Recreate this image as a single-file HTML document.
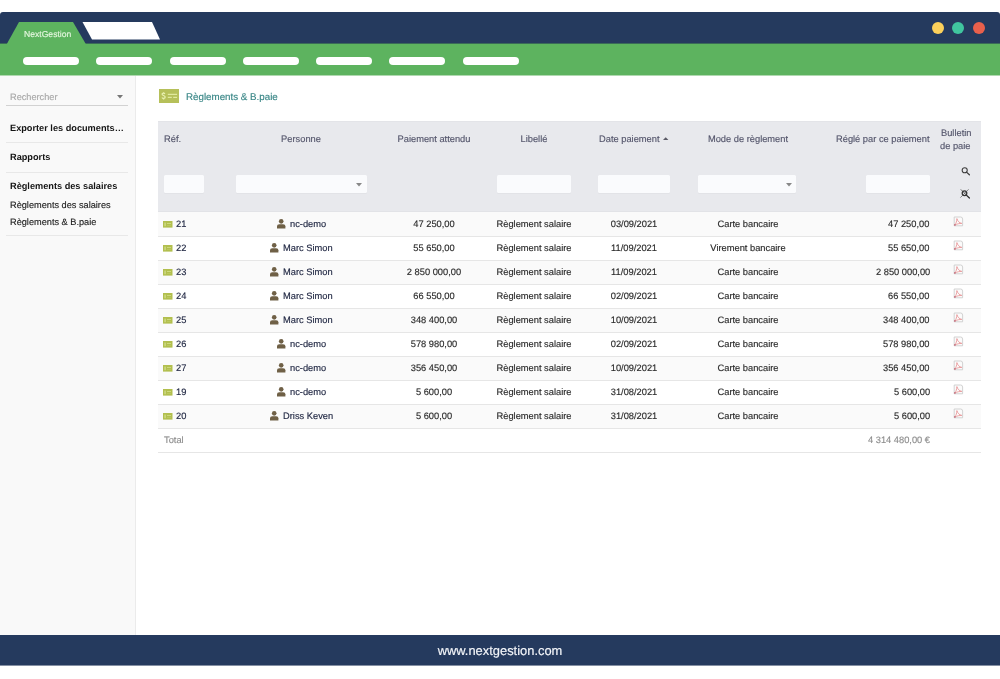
<!DOCTYPE html>
<html><head><meta charset="utf-8"><title>NextGestion</title>
<style>
html,body{margin:0;padding:0;background:#fff;width:1000px;height:679px;overflow:hidden;position:relative;font-family:"Liberation Sans",sans-serif;}
.t{position:absolute;white-space:nowrap;line-height:1;will-change:transform;text-rendering:geometricPrecision;-webkit-text-stroke-width:0.15px;}
.r{position:absolute;}
</style></head><body>
<div class="r" style="left:0px;top:12px;width:1000px;height:31px;background:#253a5e;border-radius:3px 3px 0 0;"></div>
<div class="r" style="left:0px;top:43px;width:1000px;height:1px;background:#3a6b58;"></div>
<div class="r" style="left:0px;top:44px;width:1000px;height:31px;background:#5db35f;"></div>
<div class="r" style="left:0px;top:75px;width:1000px;height:1px;background:#b0d9b0;"></div>
<svg class="r" style="left:0;top:0" width="200" height="45" viewBox="0 0 200 45"><polygon points="19,22 73,22 85.8,44 6.8,44" fill="#5db35f"/><polygon points="82.5,22 152,22 160,39.5 92,39.5" fill="#fff"/></svg>
<div class="t" style="left:23.50px;top:30.02px;font-size:8.6px;color:#e4f6de;">NextGestion</div>
<div class="r" style="left:932px;top:21.8px;width:12px;height:12px;background:#fcd05b;border-radius:50%;"></div>
<div class="r" style="left:952.2px;top:21.8px;width:12px;height:12px;background:#40c59f;border-radius:50%;"></div>
<div class="r" style="left:973px;top:21.8px;width:12px;height:12px;background:#e9604c;border-radius:50%;"></div>
<div class="r" style="left:23.0px;top:56.8px;width:56px;height:8px;background:#fff;border-radius:4px;"></div>
<div class="r" style="left:96.25px;top:56.8px;width:56px;height:8px;background:#fff;border-radius:4px;"></div>
<div class="r" style="left:169.5px;top:56.8px;width:56px;height:8px;background:#fff;border-radius:4px;"></div>
<div class="r" style="left:242.75px;top:56.8px;width:56px;height:8px;background:#fff;border-radius:4px;"></div>
<div class="r" style="left:316.0px;top:56.8px;width:56px;height:8px;background:#fff;border-radius:4px;"></div>
<div class="r" style="left:389.25px;top:56.8px;width:56px;height:8px;background:#fff;border-radius:4px;"></div>
<div class="r" style="left:462.5px;top:56.8px;width:56px;height:8px;background:#fff;border-radius:4px;"></div>
<div class="r" style="left:0px;top:76px;width:135px;height:559px;background:#f9f9f9;"></div>
<div class="r" style="left:135px;top:76px;width:1px;height:559px;background:#ebebeb;"></div>
<div class="t" style="left:10.00px;top:92.51px;font-size:9.2px;color:#a8a8a8;">Rechercher</div>
<div class="r" style="left:6px;top:105px;width:122px;height:1px;background:#d2d2d2;"></div>
<svg class="r" style="left:117px;top:94.5px" width="6" height="4"><polygon points="0,0 6,0 3,3.5" fill="#777"/></svg>
<div class="t" style="left:10.00px;top:123.51px;font-size:9.2px;color:#141414;font-weight:bold;-webkit-text-stroke-width:0;">Exporter les documents…</div>
<div class="r" style="left:6px;top:142px;width:122px;height:1px;background:#e8e8e8;"></div>
<div class="t" style="left:10.00px;top:153.01px;font-size:9.2px;color:#141414;font-weight:bold;-webkit-text-stroke-width:0;">Rapports</div>
<div class="r" style="left:6px;top:172px;width:122px;height:1px;background:#e8e8e8;"></div>
<div class="t" style="left:10.00px;top:182.11px;font-size:9.2px;color:#141414;font-weight:bold;-webkit-text-stroke-width:0;">Règlements des salaires</div>
<div class="t" style="left:10.00px;top:200.81px;font-size:9.2px;color:#1e1e1e;">Règlements des salaires</div>
<div class="t" style="left:10.00px;top:217.81px;font-size:9.2px;color:#1e1e1e;">Règlements &amp; B.paie</div>
<div class="r" style="left:6px;top:235px;width:122px;height:1px;background:#e8e8e8;"></div>
<div class="r" style="left:159px;top:89.2px;width:20px;height:13.6px;background:#b6c05a;"></div>
<svg class="r" style="left:159px;top:89.2px" width="20" height="14" viewBox="0 0 20 14"><path d="M5.6 4.6 C5.2 3.9 4.6 3.7 4.1 3.7 C3.3 3.7 2.8 4.2 2.8 4.8 C2.8 6.3 5.9 5.8 5.9 7.6 C5.9 8.5 5.2 9 4.3 9 C3.6 9 3 8.7 2.7 8.1 M4.3 2.8 V3.7 M4.3 9 V10" fill="none" stroke="#eaf1b4" stroke-width="1.2" transform="translate(0.3,0.4)"/><rect x="8.8" y="4.8" width="9.3" height="1.1" fill="#e6eea6"/><rect x="8.8" y="7.8" width="4" height="1.1" fill="#e6eea6"/><rect x="14.2" y="7.8" width="3.9" height="1.1" fill="#e6eea6"/></svg>
<div class="t" style="left:185.70px;top:92.53px;font-size:9.77px;color:#378585;">Règlements &amp; B.paie</div>
<div class="r" style="left:158px;top:121px;width:823px;height:91px;background:#e8e9ed;border-top:1px solid #e3e4e8;border-bottom:1px solid #e2e3e7;box-sizing:border-box;"></div>
<div class="t" style="left:163.70px;top:135.13px;font-size:9.3px;color:#55566c;">Réf.</div>
<div class="t" style="left:151.20px;width:300px;text-align:center;top:135.13px;font-size:9.3px;color:#55566c;">Personne</div>
<div class="t" style="left:284.00px;width:300px;text-align:center;top:135.13px;font-size:9.3px;color:#55566c;">Paiement attendu</div>
<div class="t" style="left:384.00px;width:300px;text-align:center;top:135.13px;font-size:9.3px;color:#55566c;">Libellé</div>
<div class="t" style="left:599.40px;top:135.13px;font-size:9.3px;color:#55566c;">Date paiement</div>
<svg class="r" style="left:662.8px;top:137.4px" width="6" height="4"><polygon points="0,3 5.4,3 2.7,0.2" fill="#5a5a66"/></svg>
<div class="t" style="left:597.70px;width:300px;text-align:center;top:135.13px;font-size:9.3px;color:#55566c;">Mode de règlement</div>
<div class="t" style="right:70.30px;text-align:right;top:135.13px;font-size:9.3px;color:#55566c;">Réglé par ce paiement</div>
<div class="t" style="left:940.70px;top:129.13px;font-size:9.3px;color:#55566c;">Bulletin</div>
<div class="t" style="left:940.30px;top:141.53px;font-size:9.3px;color:#55566c;">de paie</div>
<div class="r" style="left:163.7px;top:175px;width:40.3px;height:18px;background:#fafbfd;box-shadow:0 1px 0 #e2e3e7;border-radius:1.5px;"></div>
<div class="r" style="left:236px;top:175px;width:130.6px;height:18px;background:#fafbfd;box-shadow:0 1px 0 #e2e3e7;border-radius:1.5px;"></div>
<svg class="r" style="left:356.1px;top:182.5px" width="6" height="4"><polygon points="0,0 6,0 3,3.5" fill="#888"/></svg>
<div class="r" style="left:497px;top:175px;width:74px;height:18px;background:#fafbfd;box-shadow:0 1px 0 #e2e3e7;border-radius:1.5px;"></div>
<div class="r" style="left:597.7px;top:175px;width:72.8px;height:18px;background:#fafbfd;box-shadow:0 1px 0 #e2e3e7;border-radius:1.5px;"></div>
<div class="r" style="left:698.2px;top:175px;width:98.0px;height:18px;background:#fafbfd;box-shadow:0 1px 0 #e2e3e7;border-radius:1.5px;"></div>
<svg class="r" style="left:785.7px;top:182.5px" width="6" height="4"><polygon points="0,0 6,0 3,3.5" fill="#888"/></svg>
<div class="r" style="left:865.5px;top:175px;width:64.5px;height:18px;background:#fafbfd;box-shadow:0 1px 0 #e2e3e7;border-radius:1.5px;"></div>
<svg class="r" style="left:958px;top:164px" width="14" height="14" viewBox="0 0 14 14"><circle cx="6.7" cy="6.2" r="2.55" fill="none" stroke="#3c3c3c" stroke-width="1.05"/><line x1="8.5" y1="8.1" x2="11.4" y2="10.8" stroke="#3c3c3c" stroke-width="1.25" stroke-linecap="round"/></svg>
<svg class="r" style="left:958px;top:187px" width="14" height="14" viewBox="0 0 14 14"><circle cx="6.5" cy="6.2" r="2.3" fill="none" stroke="#333" stroke-width="1.25"/><line x1="2.8" y1="2.4" x2="11.4" y2="11" stroke="#444" stroke-width="0.8"/><line x1="10.6" y1="2.3" x2="2.4" y2="10.6" stroke="#555" stroke-width="0.7"/><line x1="8.3" y1="8.1" x2="11.4" y2="11" stroke="#333" stroke-width="1.2" stroke-linecap="round"/></svg>
<div class="r" style="left:158px;top:404px;width:823px;height:24px;background:#fafafa;"></div>
<div class="r" style="left:158px;top:380px;width:823px;height:24px;background:#ffffff;"></div>
<div class="r" style="left:158px;top:356px;width:823px;height:24px;background:#fafafa;"></div>
<div class="r" style="left:158px;top:332px;width:823px;height:24px;background:#ffffff;"></div>
<div class="r" style="left:158px;top:308px;width:823px;height:24px;background:#fafafa;"></div>
<div class="r" style="left:158px;top:284px;width:823px;height:24px;background:#ffffff;"></div>
<div class="r" style="left:158px;top:260px;width:823px;height:24px;background:#fafafa;"></div>
<div class="r" style="left:158px;top:236px;width:823px;height:24px;background:#ffffff;"></div>
<div class="r" style="left:158px;top:212px;width:823px;height:24px;background:#fafafa;"></div>
<svg class="r" style="left:163.3px;top:220.90px" width="10" height="7" viewBox="0 0 10 7"><rect x="0" y="0" width="9.5" height="6.6" fill="#b2bf4e"/><rect x="1.3" y="1.6" width="1.6" height="3.6" fill="#cbd880"/><rect x="4" y="2.2" width="4" height="0.8" fill="#d4e08a"/><rect x="4" y="4" width="4" height="0.6" fill="#c2cf6a"/></svg>
<div class="t" style="left:175.70px;top:219.73px;font-size:9.3px;color:#232a45;">21</div>
<svg class="r" style="left:276.71px;top:218.60px" width="10" height="11" viewBox="0 0 10 11"><circle cx="4.2" cy="2.35" r="2.3" fill="#6f6046"/><path d="M0 9.4 V7.3 Q0 5.3 2.3 5.3 H6.1 Q8.4 5.3 8.4 7.3 V9.4 Z" fill="#6f6046"/></svg>
<div class="t" style="left:289.51px;top:219.73px;font-size:9.3px;color:#232a45;">nc-demo</div>
<div class="t" style="left:284.00px;width:300px;text-align:center;top:219.73px;font-size:9.3px;color:#2b2b2b;">47 250,00</div>
<div class="t" style="left:384.30px;width:300px;text-align:center;top:219.73px;font-size:9.3px;color:#2b2b2b;">Règlement salaire</div>
<div class="t" style="left:484.20px;width:300px;text-align:center;top:219.73px;font-size:9.3px;color:#2b2b2b;">03/09/2021</div>
<div class="t" style="left:597.80px;width:300px;text-align:center;top:219.73px;font-size:9.3px;color:#2b2b2b;">Carte bancaire</div>
<div class="t" style="right:70.20px;text-align:right;top:219.73px;font-size:9.3px;color:#2b2b2b;">47 250,00</div>
<svg class="r" style="left:953px;top:216.30px" width="11" height="11" viewBox="0 0 11 11"><path d="M1.2 1 H7.6 Q9.6 1 9.6 3 V9.8 H1.2 Z" fill="#fbfbfb" stroke="#cdcdcd" stroke-width="0.9"/><path d="M1.6 9.1 C3.2 7.4 3.8 5 3.9 2.6 C4.6 5 6.2 7 8.8 7.4 C6.6 7.4 4.2 7.8 1.6 9.1 Z" fill="none" stroke="#e79294" stroke-width="0.85"/><circle cx="1.9" cy="8.9" r="0.85" fill="#c07080"/></svg>
<svg class="r" style="left:163.3px;top:244.90px" width="10" height="7" viewBox="0 0 10 7"><rect x="0" y="0" width="9.5" height="6.6" fill="#b2bf4e"/><rect x="1.3" y="1.6" width="1.6" height="3.6" fill="#cbd880"/><rect x="4" y="2.2" width="4" height="0.8" fill="#d4e08a"/><rect x="4" y="4" width="4" height="0.6" fill="#c2cf6a"/></svg>
<div class="t" style="left:175.70px;top:243.73px;font-size:9.3px;color:#232a45;">22</div>
<svg class="r" style="left:270.00px;top:242.60px" width="10" height="11" viewBox="0 0 10 11"><circle cx="4.2" cy="2.35" r="2.3" fill="#6f6046"/><path d="M0 9.4 V7.3 Q0 5.3 2.3 5.3 H6.1 Q8.4 5.3 8.4 7.3 V9.4 Z" fill="#6f6046"/></svg>
<div class="t" style="left:282.80px;top:243.73px;font-size:9.3px;color:#232a45;">Marc Simon</div>
<div class="t" style="left:284.00px;width:300px;text-align:center;top:243.73px;font-size:9.3px;color:#2b2b2b;">55 650,00</div>
<div class="t" style="left:384.30px;width:300px;text-align:center;top:243.73px;font-size:9.3px;color:#2b2b2b;">Règlement salaire</div>
<div class="t" style="left:484.20px;width:300px;text-align:center;top:243.73px;font-size:9.3px;color:#2b2b2b;">11/09/2021</div>
<div class="t" style="left:597.80px;width:300px;text-align:center;top:243.73px;font-size:9.3px;color:#2b2b2b;">Virement bancaire</div>
<div class="t" style="right:70.20px;text-align:right;top:243.73px;font-size:9.3px;color:#2b2b2b;">55 650,00</div>
<svg class="r" style="left:953px;top:240.30px" width="11" height="11" viewBox="0 0 11 11"><path d="M1.2 1 H7.6 Q9.6 1 9.6 3 V9.8 H1.2 Z" fill="#fbfbfb" stroke="#cdcdcd" stroke-width="0.9"/><path d="M1.6 9.1 C3.2 7.4 3.8 5 3.9 2.6 C4.6 5 6.2 7 8.8 7.4 C6.6 7.4 4.2 7.8 1.6 9.1 Z" fill="none" stroke="#e79294" stroke-width="0.85"/><circle cx="1.9" cy="8.9" r="0.85" fill="#c07080"/></svg>
<svg class="r" style="left:163.3px;top:268.90px" width="10" height="7" viewBox="0 0 10 7"><rect x="0" y="0" width="9.5" height="6.6" fill="#b2bf4e"/><rect x="1.3" y="1.6" width="1.6" height="3.6" fill="#cbd880"/><rect x="4" y="2.2" width="4" height="0.8" fill="#d4e08a"/><rect x="4" y="4" width="4" height="0.6" fill="#c2cf6a"/></svg>
<div class="t" style="left:175.70px;top:267.73px;font-size:9.3px;color:#232a45;">23</div>
<svg class="r" style="left:270.00px;top:266.60px" width="10" height="11" viewBox="0 0 10 11"><circle cx="4.2" cy="2.35" r="2.3" fill="#6f6046"/><path d="M0 9.4 V7.3 Q0 5.3 2.3 5.3 H6.1 Q8.4 5.3 8.4 7.3 V9.4 Z" fill="#6f6046"/></svg>
<div class="t" style="left:282.80px;top:267.73px;font-size:9.3px;color:#232a45;">Marc Simon</div>
<div class="t" style="left:284.00px;width:300px;text-align:center;top:267.73px;font-size:9.3px;color:#2b2b2b;">2 850 000,00</div>
<div class="t" style="left:384.30px;width:300px;text-align:center;top:267.73px;font-size:9.3px;color:#2b2b2b;">Règlement salaire</div>
<div class="t" style="left:484.20px;width:300px;text-align:center;top:267.73px;font-size:9.3px;color:#2b2b2b;">11/09/2021</div>
<div class="t" style="left:597.80px;width:300px;text-align:center;top:267.73px;font-size:9.3px;color:#2b2b2b;">Carte bancaire</div>
<div class="t" style="right:70.20px;text-align:right;top:267.73px;font-size:9.3px;color:#2b2b2b;">2 850 000,00</div>
<svg class="r" style="left:953px;top:264.30px" width="11" height="11" viewBox="0 0 11 11"><path d="M1.2 1 H7.6 Q9.6 1 9.6 3 V9.8 H1.2 Z" fill="#fbfbfb" stroke="#cdcdcd" stroke-width="0.9"/><path d="M1.6 9.1 C3.2 7.4 3.8 5 3.9 2.6 C4.6 5 6.2 7 8.8 7.4 C6.6 7.4 4.2 7.8 1.6 9.1 Z" fill="none" stroke="#e79294" stroke-width="0.85"/><circle cx="1.9" cy="8.9" r="0.85" fill="#c07080"/></svg>
<svg class="r" style="left:163.3px;top:292.90px" width="10" height="7" viewBox="0 0 10 7"><rect x="0" y="0" width="9.5" height="6.6" fill="#b2bf4e"/><rect x="1.3" y="1.6" width="1.6" height="3.6" fill="#cbd880"/><rect x="4" y="2.2" width="4" height="0.8" fill="#d4e08a"/><rect x="4" y="4" width="4" height="0.6" fill="#c2cf6a"/></svg>
<div class="t" style="left:175.70px;top:291.73px;font-size:9.3px;color:#232a45;">24</div>
<svg class="r" style="left:270.00px;top:290.60px" width="10" height="11" viewBox="0 0 10 11"><circle cx="4.2" cy="2.35" r="2.3" fill="#6f6046"/><path d="M0 9.4 V7.3 Q0 5.3 2.3 5.3 H6.1 Q8.4 5.3 8.4 7.3 V9.4 Z" fill="#6f6046"/></svg>
<div class="t" style="left:282.80px;top:291.73px;font-size:9.3px;color:#232a45;">Marc Simon</div>
<div class="t" style="left:284.00px;width:300px;text-align:center;top:291.73px;font-size:9.3px;color:#2b2b2b;">66 550,00</div>
<div class="t" style="left:384.30px;width:300px;text-align:center;top:291.73px;font-size:9.3px;color:#2b2b2b;">Règlement salaire</div>
<div class="t" style="left:484.20px;width:300px;text-align:center;top:291.73px;font-size:9.3px;color:#2b2b2b;">02/09/2021</div>
<div class="t" style="left:597.80px;width:300px;text-align:center;top:291.73px;font-size:9.3px;color:#2b2b2b;">Carte bancaire</div>
<div class="t" style="right:70.20px;text-align:right;top:291.73px;font-size:9.3px;color:#2b2b2b;">66 550,00</div>
<svg class="r" style="left:953px;top:288.30px" width="11" height="11" viewBox="0 0 11 11"><path d="M1.2 1 H7.6 Q9.6 1 9.6 3 V9.8 H1.2 Z" fill="#fbfbfb" stroke="#cdcdcd" stroke-width="0.9"/><path d="M1.6 9.1 C3.2 7.4 3.8 5 3.9 2.6 C4.6 5 6.2 7 8.8 7.4 C6.6 7.4 4.2 7.8 1.6 9.1 Z" fill="none" stroke="#e79294" stroke-width="0.85"/><circle cx="1.9" cy="8.9" r="0.85" fill="#c07080"/></svg>
<svg class="r" style="left:163.3px;top:316.90px" width="10" height="7" viewBox="0 0 10 7"><rect x="0" y="0" width="9.5" height="6.6" fill="#b2bf4e"/><rect x="1.3" y="1.6" width="1.6" height="3.6" fill="#cbd880"/><rect x="4" y="2.2" width="4" height="0.8" fill="#d4e08a"/><rect x="4" y="4" width="4" height="0.6" fill="#c2cf6a"/></svg>
<div class="t" style="left:175.70px;top:315.73px;font-size:9.3px;color:#232a45;">25</div>
<svg class="r" style="left:270.00px;top:314.60px" width="10" height="11" viewBox="0 0 10 11"><circle cx="4.2" cy="2.35" r="2.3" fill="#6f6046"/><path d="M0 9.4 V7.3 Q0 5.3 2.3 5.3 H6.1 Q8.4 5.3 8.4 7.3 V9.4 Z" fill="#6f6046"/></svg>
<div class="t" style="left:282.80px;top:315.73px;font-size:9.3px;color:#232a45;">Marc Simon</div>
<div class="t" style="left:284.00px;width:300px;text-align:center;top:315.73px;font-size:9.3px;color:#2b2b2b;">348 400,00</div>
<div class="t" style="left:384.30px;width:300px;text-align:center;top:315.73px;font-size:9.3px;color:#2b2b2b;">Règlement salaire</div>
<div class="t" style="left:484.20px;width:300px;text-align:center;top:315.73px;font-size:9.3px;color:#2b2b2b;">10/09/2021</div>
<div class="t" style="left:597.80px;width:300px;text-align:center;top:315.73px;font-size:9.3px;color:#2b2b2b;">Carte bancaire</div>
<div class="t" style="right:70.20px;text-align:right;top:315.73px;font-size:9.3px;color:#2b2b2b;">348 400,00</div>
<svg class="r" style="left:953px;top:312.30px" width="11" height="11" viewBox="0 0 11 11"><path d="M1.2 1 H7.6 Q9.6 1 9.6 3 V9.8 H1.2 Z" fill="#fbfbfb" stroke="#cdcdcd" stroke-width="0.9"/><path d="M1.6 9.1 C3.2 7.4 3.8 5 3.9 2.6 C4.6 5 6.2 7 8.8 7.4 C6.6 7.4 4.2 7.8 1.6 9.1 Z" fill="none" stroke="#e79294" stroke-width="0.85"/><circle cx="1.9" cy="8.9" r="0.85" fill="#c07080"/></svg>
<svg class="r" style="left:163.3px;top:340.90px" width="10" height="7" viewBox="0 0 10 7"><rect x="0" y="0" width="9.5" height="6.6" fill="#b2bf4e"/><rect x="1.3" y="1.6" width="1.6" height="3.6" fill="#cbd880"/><rect x="4" y="2.2" width="4" height="0.8" fill="#d4e08a"/><rect x="4" y="4" width="4" height="0.6" fill="#c2cf6a"/></svg>
<div class="t" style="left:175.70px;top:339.73px;font-size:9.3px;color:#232a45;">26</div>
<svg class="r" style="left:276.71px;top:338.60px" width="10" height="11" viewBox="0 0 10 11"><circle cx="4.2" cy="2.35" r="2.3" fill="#6f6046"/><path d="M0 9.4 V7.3 Q0 5.3 2.3 5.3 H6.1 Q8.4 5.3 8.4 7.3 V9.4 Z" fill="#6f6046"/></svg>
<div class="t" style="left:289.51px;top:339.73px;font-size:9.3px;color:#232a45;">nc-demo</div>
<div class="t" style="left:284.00px;width:300px;text-align:center;top:339.73px;font-size:9.3px;color:#2b2b2b;">578 980,00</div>
<div class="t" style="left:384.30px;width:300px;text-align:center;top:339.73px;font-size:9.3px;color:#2b2b2b;">Règlement salaire</div>
<div class="t" style="left:484.20px;width:300px;text-align:center;top:339.73px;font-size:9.3px;color:#2b2b2b;">02/09/2021</div>
<div class="t" style="left:597.80px;width:300px;text-align:center;top:339.73px;font-size:9.3px;color:#2b2b2b;">Carte bancaire</div>
<div class="t" style="right:70.20px;text-align:right;top:339.73px;font-size:9.3px;color:#2b2b2b;">578 980,00</div>
<svg class="r" style="left:953px;top:336.30px" width="11" height="11" viewBox="0 0 11 11"><path d="M1.2 1 H7.6 Q9.6 1 9.6 3 V9.8 H1.2 Z" fill="#fbfbfb" stroke="#cdcdcd" stroke-width="0.9"/><path d="M1.6 9.1 C3.2 7.4 3.8 5 3.9 2.6 C4.6 5 6.2 7 8.8 7.4 C6.6 7.4 4.2 7.8 1.6 9.1 Z" fill="none" stroke="#e79294" stroke-width="0.85"/><circle cx="1.9" cy="8.9" r="0.85" fill="#c07080"/></svg>
<svg class="r" style="left:163.3px;top:364.90px" width="10" height="7" viewBox="0 0 10 7"><rect x="0" y="0" width="9.5" height="6.6" fill="#b2bf4e"/><rect x="1.3" y="1.6" width="1.6" height="3.6" fill="#cbd880"/><rect x="4" y="2.2" width="4" height="0.8" fill="#d4e08a"/><rect x="4" y="4" width="4" height="0.6" fill="#c2cf6a"/></svg>
<div class="t" style="left:175.70px;top:363.73px;font-size:9.3px;color:#232a45;">27</div>
<svg class="r" style="left:276.71px;top:362.60px" width="10" height="11" viewBox="0 0 10 11"><circle cx="4.2" cy="2.35" r="2.3" fill="#6f6046"/><path d="M0 9.4 V7.3 Q0 5.3 2.3 5.3 H6.1 Q8.4 5.3 8.4 7.3 V9.4 Z" fill="#6f6046"/></svg>
<div class="t" style="left:289.51px;top:363.73px;font-size:9.3px;color:#232a45;">nc-demo</div>
<div class="t" style="left:284.00px;width:300px;text-align:center;top:363.73px;font-size:9.3px;color:#2b2b2b;">356 450,00</div>
<div class="t" style="left:384.30px;width:300px;text-align:center;top:363.73px;font-size:9.3px;color:#2b2b2b;">Règlement salaire</div>
<div class="t" style="left:484.20px;width:300px;text-align:center;top:363.73px;font-size:9.3px;color:#2b2b2b;">10/09/2021</div>
<div class="t" style="left:597.80px;width:300px;text-align:center;top:363.73px;font-size:9.3px;color:#2b2b2b;">Carte bancaire</div>
<div class="t" style="right:70.20px;text-align:right;top:363.73px;font-size:9.3px;color:#2b2b2b;">356 450,00</div>
<svg class="r" style="left:953px;top:360.30px" width="11" height="11" viewBox="0 0 11 11"><path d="M1.2 1 H7.6 Q9.6 1 9.6 3 V9.8 H1.2 Z" fill="#fbfbfb" stroke="#cdcdcd" stroke-width="0.9"/><path d="M1.6 9.1 C3.2 7.4 3.8 5 3.9 2.6 C4.6 5 6.2 7 8.8 7.4 C6.6 7.4 4.2 7.8 1.6 9.1 Z" fill="none" stroke="#e79294" stroke-width="0.85"/><circle cx="1.9" cy="8.9" r="0.85" fill="#c07080"/></svg>
<svg class="r" style="left:163.3px;top:388.90px" width="10" height="7" viewBox="0 0 10 7"><rect x="0" y="0" width="9.5" height="6.6" fill="#b2bf4e"/><rect x="1.3" y="1.6" width="1.6" height="3.6" fill="#cbd880"/><rect x="4" y="2.2" width="4" height="0.8" fill="#d4e08a"/><rect x="4" y="4" width="4" height="0.6" fill="#c2cf6a"/></svg>
<div class="t" style="left:175.70px;top:387.73px;font-size:9.3px;color:#232a45;">19</div>
<svg class="r" style="left:276.71px;top:386.60px" width="10" height="11" viewBox="0 0 10 11"><circle cx="4.2" cy="2.35" r="2.3" fill="#6f6046"/><path d="M0 9.4 V7.3 Q0 5.3 2.3 5.3 H6.1 Q8.4 5.3 8.4 7.3 V9.4 Z" fill="#6f6046"/></svg>
<div class="t" style="left:289.51px;top:387.73px;font-size:9.3px;color:#232a45;">nc-demo</div>
<div class="t" style="left:284.00px;width:300px;text-align:center;top:387.73px;font-size:9.3px;color:#2b2b2b;">5 600,00</div>
<div class="t" style="left:384.30px;width:300px;text-align:center;top:387.73px;font-size:9.3px;color:#2b2b2b;">Règlement salaire</div>
<div class="t" style="left:484.20px;width:300px;text-align:center;top:387.73px;font-size:9.3px;color:#2b2b2b;">31/08/2021</div>
<div class="t" style="left:597.80px;width:300px;text-align:center;top:387.73px;font-size:9.3px;color:#2b2b2b;">Carte bancaire</div>
<div class="t" style="right:70.20px;text-align:right;top:387.73px;font-size:9.3px;color:#2b2b2b;">5 600,00</div>
<svg class="r" style="left:953px;top:384.30px" width="11" height="11" viewBox="0 0 11 11"><path d="M1.2 1 H7.6 Q9.6 1 9.6 3 V9.8 H1.2 Z" fill="#fbfbfb" stroke="#cdcdcd" stroke-width="0.9"/><path d="M1.6 9.1 C3.2 7.4 3.8 5 3.9 2.6 C4.6 5 6.2 7 8.8 7.4 C6.6 7.4 4.2 7.8 1.6 9.1 Z" fill="none" stroke="#e79294" stroke-width="0.85"/><circle cx="1.9" cy="8.9" r="0.85" fill="#c07080"/></svg>
<svg class="r" style="left:163.3px;top:412.90px" width="10" height="7" viewBox="0 0 10 7"><rect x="0" y="0" width="9.5" height="6.6" fill="#b2bf4e"/><rect x="1.3" y="1.6" width="1.6" height="3.6" fill="#cbd880"/><rect x="4" y="2.2" width="4" height="0.8" fill="#d4e08a"/><rect x="4" y="4" width="4" height="0.6" fill="#c2cf6a"/></svg>
<div class="t" style="left:175.70px;top:411.73px;font-size:9.3px;color:#232a45;">20</div>
<svg class="r" style="left:269.73px;top:410.60px" width="10" height="11" viewBox="0 0 10 11"><circle cx="4.2" cy="2.35" r="2.3" fill="#6f6046"/><path d="M0 9.4 V7.3 Q0 5.3 2.3 5.3 H6.1 Q8.4 5.3 8.4 7.3 V9.4 Z" fill="#6f6046"/></svg>
<div class="t" style="left:282.53px;top:411.73px;font-size:9.3px;color:#232a45;">Driss Keven</div>
<div class="t" style="left:284.00px;width:300px;text-align:center;top:411.73px;font-size:9.3px;color:#2b2b2b;">5 600,00</div>
<div class="t" style="left:384.30px;width:300px;text-align:center;top:411.73px;font-size:9.3px;color:#2b2b2b;">Règlement salaire</div>
<div class="t" style="left:484.20px;width:300px;text-align:center;top:411.73px;font-size:9.3px;color:#2b2b2b;">31/08/2021</div>
<div class="t" style="left:597.80px;width:300px;text-align:center;top:411.73px;font-size:9.3px;color:#2b2b2b;">Carte bancaire</div>
<div class="t" style="right:70.20px;text-align:right;top:411.73px;font-size:9.3px;color:#2b2b2b;">5 600,00</div>
<svg class="r" style="left:953px;top:408.30px" width="11" height="11" viewBox="0 0 11 11"><path d="M1.2 1 H7.6 Q9.6 1 9.6 3 V9.8 H1.2 Z" fill="#fbfbfb" stroke="#cdcdcd" stroke-width="0.9"/><path d="M1.6 9.1 C3.2 7.4 3.8 5 3.9 2.6 C4.6 5 6.2 7 8.8 7.4 C6.6 7.4 4.2 7.8 1.6 9.1 Z" fill="none" stroke="#e79294" stroke-width="0.85"/><circle cx="1.9" cy="8.9" r="0.85" fill="#c07080"/></svg>
<div class="r" style="left:158px;top:236px;width:823px;height:1px;background:#e6e6e6;"></div>
<div class="r" style="left:158px;top:260px;width:823px;height:1px;background:#e6e6e6;"></div>
<div class="r" style="left:158px;top:284px;width:823px;height:1px;background:#e6e6e6;"></div>
<div class="r" style="left:158px;top:308px;width:823px;height:1px;background:#e6e6e6;"></div>
<div class="r" style="left:158px;top:332px;width:823px;height:1px;background:#e6e6e6;"></div>
<div class="r" style="left:158px;top:356px;width:823px;height:1px;background:#e6e6e6;"></div>
<div class="r" style="left:158px;top:380px;width:823px;height:1px;background:#e6e6e6;"></div>
<div class="r" style="left:158px;top:404px;width:823px;height:1px;background:#e6e6e6;"></div>
<div class="r" style="left:158px;top:428px;width:823px;height:1px;background:#e6e6e6;"></div>
<div class="r" style="left:158px;top:452px;width:823px;height:1px;background:#e6e6e6;"></div>
<div class="t" style="left:163.70px;top:435.73px;font-size:9.3px;color:#8d8d8d;">Total</div>
<div class="t" style="right:70.20px;text-align:right;top:435.73px;font-size:9.3px;color:#8d8d8d;">4 314 480,00 €</div>
<div class="r" style="left:0px;top:635px;width:1000px;height:30px;background:#253a5e;"></div>
<div class="r" style="left:0px;top:665px;width:1000px;height:1px;background:#8590a4;"></div>
<div class="t" style="left:350.00px;width:300px;text-align:center;top:644.98px;font-size:12.9px;color:#f4f6fa;">www.nextgestion.com</div>
</body></html>
